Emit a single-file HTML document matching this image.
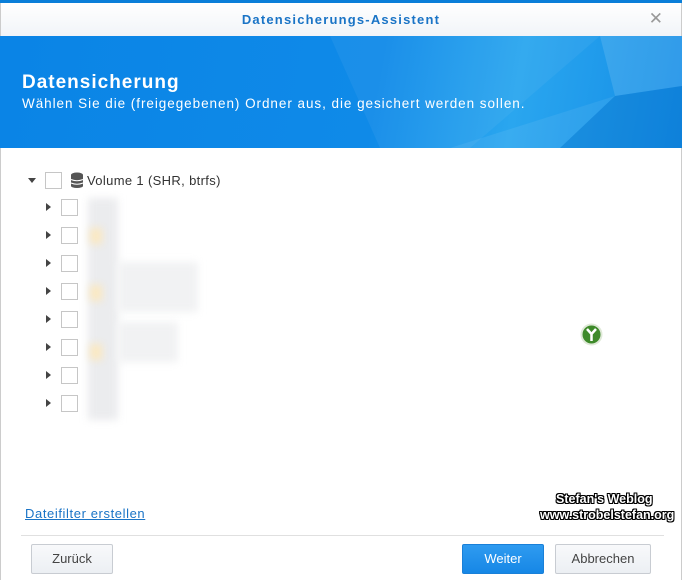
<!DOCTYPE html>
<html><head><meta charset="utf-8"><style>
*{margin:0;padding:0;box-sizing:border-box}
body{width:682px;height:580px;overflow:hidden;background:#fff;font-family:"Liberation Sans",sans-serif;position:relative}
.top{position:absolute;left:0;top:0;width:682px;height:3px;background:#0a7fd9}
.hdr{position:absolute;left:0;top:3px;width:682px;height:33px;background:linear-gradient(#fff,#f1f4f8);border-left:1px solid #ccc;border-right:1px solid #ccc}
.hdr .t{position:absolute;left:0;right:0;top:9px;text-align:center;font-size:13px;font-weight:bold;color:#1a74c6;letter-spacing:1.2px}
.hdr .x{position:absolute;right:18px;top:6px;font-size:17px;color:#999}
.ban{position:absolute;left:0;top:36px;width:682px;height:112px;background:linear-gradient(100deg,#0a84e6 0%,#0f8ae8 55%,#2aa6ef 75%,#138ce6 100%);overflow:hidden}
.ban h1{position:absolute;left:22px;top:36px;font-size:19px;color:#fff;font-weight:bold;letter-spacing:1px}
.ban p{position:absolute;left:22px;top:60px;font-size:13.5px;color:#fff;letter-spacing:0.95px}
.cb{position:absolute;width:17px;height:17px;border:1px solid #c6c6c6;background:#fff}
.tri{position:absolute;width:0;height:0;border-top:4px solid transparent;border-bottom:4px solid transparent;border-left:5px solid #444}
.blur{position:absolute;filter:blur(4px)}
.link{position:absolute;left:25px;top:506px;font-size:13px;color:#1a74c6;text-decoration:underline;letter-spacing:.6px}
.sep{position:absolute;left:21px;top:535px;width:643px;height:1px;background:#e0e0e0}
.btn{position:absolute;top:544px;height:30px;border:1px solid #c8ccd2;border-radius:2px;background:linear-gradient(#f8f9fb,#eceff3);font-size:13px;color:#444;text-align:center;line-height:28px}
.wm{position:absolute;font-size:12.5px;font-weight:bold;color:#fff;text-shadow:-1px -1px 0 #000,1px -1px 0 #000,-1px 1px 0 #000,1px 1px 0 #000,0 1px 0 #000,1px 0 0 #000,0 -1px 0 #000,-1px 0 0 #000}
</style></head><body>
<div class="top"></div>
<div class="hdr"><div class="t">Datensicherungs-Assistent</div><div class="x">✕</div></div>
<div class="ban">
<svg width="682" height="112" style="position:absolute;left:0;top:0">
<polygon points="330,0 600,0 470,112 380,112" fill="#fff" opacity=".05"/>
<polygon points="600,0 682,0 682,50 615,60" fill="#fff" opacity=".12"/>
<polygon points="615,60 682,50 682,112 560,112" fill="#0060b8" opacity=".25"/>
<polygon points="450,112 615,60 560,112" fill="#fff" opacity=".07"/>
</svg>
<h1>Datensicherung</h1>
<p>Wählen Sie die (freigegebenen) Ordner aus, die gesichert werden sollen.</p>
</div>
<div style="position:absolute;left:0;top:148px;width:1px;height:432px;background:#ccc"></div>
<div style="position:absolute;right:0;top:148px;width:1px;height:432px;background:#ccc"></div>
<div style="position:absolute;left:28px;top:178px;width:0;height:0;border-left:4px solid transparent;border-right:4px solid transparent;border-top:5px solid #444"></div>
<div class="cb" style="left:45px;top:172px"></div>
<svg style="position:absolute;left:70px;top:172px" width="14" height="16"><ellipse cx="7" cy="3" rx="6" ry="2.5" fill="#555"/><rect x="1" y="3" width="12" height="11" fill="#555"/><ellipse cx="7" cy="14" rx="6" ry="2" fill="#555"/><path d="M1 7.5 Q7 10 13 7.5 M1 11 Q7 13.5 13 11" stroke="#fff" fill="none"/></svg>
<div style="position:absolute;left:87px;top:173px;font-size:13px;color:#333;letter-spacing:.35px">Volume 1 (SHR, btrfs)</div>
<div class="blur" style="left:88px;top:198px;width:30px;height:222px;background:#ebecee"></div>
<div class="blur" style="left:118px;top:262px;width:80px;height:50px;background:#f1f2f3"></div>
<div class="blur" style="left:118px;top:322px;width:60px;height:40px;background:#f1f2f3"></div>
<div class="blur" style="left:90px;top:228px;width:12px;height:16px;background:#fbe8c0"></div>
<div class="blur" style="left:90px;top:285px;width:12px;height:16px;background:#fbe8c0"></div>
<div class="blur" style="left:90px;top:344px;width:12px;height:16px;background:#fbe8c0"></div>
<div class="tri" style="left:46px;top:203px"></div><div class="cb" style="left:61px;top:199px"></div>
<div class="tri" style="left:46px;top:231px"></div><div class="cb" style="left:61px;top:227px"></div>
<div class="tri" style="left:46px;top:259px"></div><div class="cb" style="left:61px;top:255px"></div>
<div class="tri" style="left:46px;top:287px"></div><div class="cb" style="left:61px;top:283px"></div>
<div class="tri" style="left:46px;top:315px"></div><div class="cb" style="left:61px;top:311px"></div>
<div class="tri" style="left:46px;top:343px"></div><div class="cb" style="left:61px;top:339px"></div>
<div class="tri" style="left:46px;top:371px"></div><div class="cb" style="left:61px;top:367px"></div>
<div class="tri" style="left:46px;top:399px"></div><div class="cb" style="left:61px;top:395px"></div>
<svg style="position:absolute;left:580px;top:323px" width="23" height="23"><circle cx="11.5" cy="11.5" r="11" fill="#dfe9d8"/><circle cx="11.5" cy="11.5" r="9" fill="#3e8a2a"/><path d="M7 6 L11.5 11 L16 6 M11.5 11 L11.5 18" stroke="#fff" stroke-width="2.5" fill="none"/></svg>
<div class="link">Dateifilter erstellen</div>
<div class="wm" style="left:556px;top:492px">Stefan's Weblog</div>
<div class="wm" style="left:540px;top:508px">www.strobelstefan.org</div>
<div class="sep"></div>
<div class="btn" style="left:31px;width:82px">Zurück</div>
<div class="btn" style="left:462px;width:82px;background:linear-gradient(#2f9bf0,#1687e6);border-color:#1a80d8;color:#fff">Weiter</div>
<div class="btn" style="left:555px;width:96px">Abbrechen</div>
</body></html>
